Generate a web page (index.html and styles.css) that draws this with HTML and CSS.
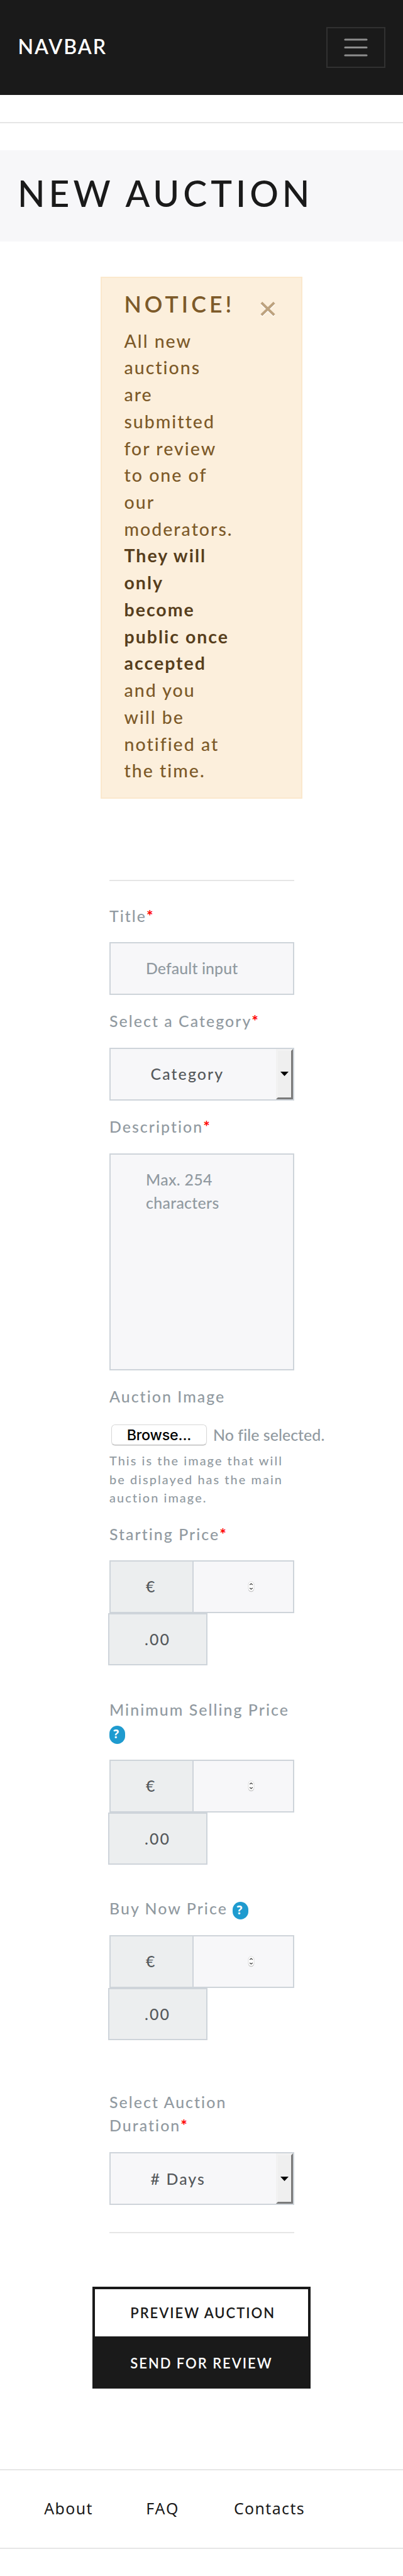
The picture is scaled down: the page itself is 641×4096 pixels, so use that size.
FILE: index.html
```html
<!DOCTYPE html>
<html lang="en">
<head>
<meta charset="utf-8">
<title>New Auction</title>
<link rel="stylesheet" href="styles.css">
</head>
<body>
<nav class="navbar">
  <a class="brand">NAVBAR</a>
  <button class="toggler" type="button" aria-label="Menu">
    <svg width="38" height="29" viewBox="0 0 38 29" fill="none" stroke="#8d8d8d" stroke-width="3.2" stroke-linecap="round"><path d="M2 2h34M2 14.5h34M2 27h34"/></svg>
  </button>
</nav>
<hr class="rule rule-top">
<header class="jumbotron"><h1>NEW AUCTION</h1></header>

<section class="alert">
  <div class="alert-head">
    <h4>NOTICE!</h4>
    <svg class="close" width="24" height="26" viewBox="0 0 24 26" fill="none" stroke-width="4"><path stroke="#fff" d="M1.8 4L22.2 23.5M22.2 4L1.8 23.5"/><path stroke="#bda27e" d="M1.8 2.3L22.2 22M22.2 2.3L1.8 22"/></svg>
  </div>
  <p>All new<br>auctions<br>are<br>submitted<br>for review<br>to one of<br>our<br>moderators.<br><strong>They will<br>only<br>become<br>public once<br>accepted</strong><br>and you<br>will be<br>notified at<br>the time.</p>
</section>

<form class="form">
  <hr class="rule">
  <label class="label label-first">Title<b>*</b></label>
  <div class="control"><span>Default input</span></div>

  <label class="label">Select a Category<b>*</b></label>
  <div class="control select"><span>Category</span><i class="arrow"><svg width="13" height="7" viewBox="0 0 13 7"><path d="M0 0h13L6.5 7z"/></svg></i></div>

  <label class="label">Description<b>*</b></label>
  <div class="control textarea"><span>Max. 254<br>characters</span></div>

  <label class="label label-image">Auction Image</label>
  <div class="file"><span class="browse">Browse...</span><span class="filename">No file selected.</span></div>
  <small class="help">This is the image that will<br>be displayed has the main<br>auction image.</small>

  <label class="label">Starting Price<b>*</b></label>
  <div class="group">
    <div class="group-row"><span class="addon euro">€</span><span class="amount"><svg width="11" height="18" viewBox="0 0 11 18" fill="none"><rect x="1" y="1.7" width="9" height="15.5" rx="4.5" fill="#bbb"/><rect x="1" y="0.8" width="9" height="15.4" rx="4.5" fill="#fff" stroke="#d0d0d0" stroke-width=".7"/><path d="M3.2 6l2.3-2 2.3 2M3.2 11l2.3 2 2.3-2" stroke="#444" stroke-width="1.3"/></svg></span></div>
    <span class="addon cents">.00</span>
  </div>

  <label class="label label-gap">Minimum Selling Price<br><span class="badge">?</span></label>
  <div class="group">
    <div class="group-row"><span class="addon euro">€</span><span class="amount"><svg width="11" height="18" viewBox="0 0 11 18" fill="none"><rect x="1" y="1.7" width="9" height="15.5" rx="4.5" fill="#bbb"/><rect x="1" y="0.8" width="9" height="15.4" rx="4.5" fill="#fff" stroke="#d0d0d0" stroke-width=".7"/><path d="M3.2 6l2.3-2 2.3 2M3.2 11l2.3 2 2.3-2" stroke="#444" stroke-width="1.3"/></svg></span></div>
    <span class="addon cents">.00</span>
  </div>

  <label class="label label-gap">Buy Now Price <span class="badge">?</span></label>
  <div class="group">
    <div class="group-row"><span class="addon euro">€</span><span class="amount"><svg width="11" height="18" viewBox="0 0 11 18" fill="none"><rect x="1" y="1.7" width="9" height="15.5" rx="4.5" fill="#bbb"/><rect x="1" y="0.8" width="9" height="15.4" rx="4.5" fill="#fff" stroke="#d0d0d0" stroke-width=".7"/><path d="M3.2 6l2.3-2 2.3 2M3.2 11l2.3 2 2.3-2" stroke="#444" stroke-width="1.3"/></svg></span></div>
    <span class="addon cents">.00</span>
  </div>

  <label class="label label-duration">Select Auction<br>Duration<b>*</b></label>
  <div class="control select"><span>#&nbsp;Days</span><i class="arrow"><svg width="13" height="7" viewBox="0 0 13 7"><path d="M0 0h13L6.5 7z"/></svg></i></div>
  <hr class="rule rule-end">
</form>

<div class="actions">
  <a class="btn btn-outline">PREVIEW AUCTION</a>
  <a class="btn btn-solid">SEND FOR REVIEW</a>
</div>

<hr class="rule">
<footer class="footer"><a class="about">About</a><a class="faq">FAQ</a><a>Contacts</a></footer>
<hr class="rule">
</body>
</html>
```
FILE: styles.css
```css
* { box-sizing: border-box; }
html { overflow: hidden; }
body {
  margin: 0;
  width: 641px;
  height: 4096px;
  background: #fff;
  color: #55595c;
  font-family: Lato, "Open Sans", sans-serif;
  font-size: 24.9px;
  font-weight: 500;
  line-height: 37.4px;
  letter-spacing: 2.04px;
}
h1, h4, p { margin: 0; }
.rule { margin: 0; border: 0; height: 2px; background: #e6e6e6; }
.rule-top { margin: 43px 0 42.5px; }

.navbar {
  height: 151px;
  padding: 0 28.4px;
  background: #1a1a1a;
  display: flex;
  align-items: center;
  justify-content: space-between;
}
.brand { color: #fff; font-size: 32px; font-weight: 600; padding-bottom: 4px; }
.toggler {
  width: 93.5px;
  height: 65px;
  padding: 0;
  border: 2px solid #313131;
  background: none;
  display: flex;
  align-items: center;
  justify-content: center;
}

.jumbotron { height: 145px; padding: 34.8px 28px 0; background: #f7f7f9; }
.jumbotron h1 {
  color: #1a1a1a;
  font-size: 57px;
  line-height: 68px;
  font-weight: 500;
  letter-spacing: 5.96px;
}

.alert {
  width: 320.7px;
  height: 830px;
  margin: 56.9px 0 128.2px 160.2px;
  padding: 21px 35.3px;
  border: 2px solid #fbe8cd;
  background: #fcefdc;
  color: #7d5a29;
}
.alert-head { display: flex; justify-content: space-between; height: 42px; }
.alert h4 { font-size: 35.6px; line-height: 42px; font-weight: 600; letter-spacing: 5.08px; }
.close { margin: 15.5px 5.5px 0 0; }
.alert p {
  margin-top: 15.2px;
  font-size: 28.5px;
  line-height: 42.73px;
  letter-spacing: 2px;
  white-space: nowrap;
}
.alert strong { color: #573e1c; font-weight: 700; }

.form { width: 293.7px; margin-left: 174px; }
.label { display: block; margin: 23.2px 0 23.4px; color: #919aa1; white-space: nowrap; }
.label b { color: #f00; }
.label-first { margin: 37.2px 0 23px; }
.label-image { margin: 22.9px 0 25.4px; }
.label-gap { margin: 51.2px 0 23.7px; }
.label-duration { margin: 79.2px 0 24.1px; }

.control {
  height: 83.7px;
  border: 2px solid #ced4da;
  background: #f7f7f9;
  padding-left: 56px;
  display: flex;
  align-items: center;
  color: #919aa1;
  letter-spacing: 0.1px;
}
.select {
  padding-left: 63.5px;
  justify-content: space-between;
  color: #55595c;
  letter-spacing: 2.1px;
}
.arrow {
  align-self: stretch;
  width: 26.5px;
  border: 3px solid;
  border-color: #f2f2f2 #7a7a7a #7a7a7a #f2f2f2;
  background: #efefef;
  display: flex;
  align-items: center;
  justify-content: center;
}
.textarea { height: 345.7px; align-items: flex-start; padding-top: 21.2px; letter-spacing: 0.3px; }

.file { display: flex; align-items: center; height: 34px; margin: 0 -60px 8.7px 3.2px; white-space: nowrap; }
.browse {
  width: 151.4px;
  height: 33px;
  border: 1px solid #d8d8d8;
  border-bottom-color: #bdbdbd;
  border-radius: 6px;
  box-shadow: 0 1px 1px #ddd;
  color: #000;
  font: 500 23.3px/31px Inter, sans-serif;
  letter-spacing: -0.2px;
  text-align: center;
}
.filename { margin-left: 10.5px; color: #919aa1; letter-spacing: 0.05px; }
.help {
  display: block;
  color: #919aa1;
  font-size: 19.9px;
  line-height: 29.95px;
  letter-spacing: 2.05px;
  white-space: nowrap;
}

.group { height: 167px; }
.group-row { display: flex; height: 83.4px; }
.addon {
  display: flex;
  align-items: center;
  height: 83.5px;
  border: 2px solid #ced4da;
  background: #eceeef;
}
.euro { width: 134px; padding-left: 56px; }
.cents { width: 158.4px; margin-left: -2px; padding-left: 56px; }
.amount {
  flex: 1;
  height: 83.5px;
  border: 2px solid #ced4da;
  border-left: 0;
  background: #f7f7f9;
  display: flex;
  align-items: center;
  padding-left: 86px;
}
.badge {
  display: inline-block;
  overflow: hidden;
  vertical-align: -7.9px;
  width: 25px;
  height: 28.6px;
  border-radius: 12.5px;
  padding-left: 6.3px;
  background: #1f9bcf;
  color: #fff;
  font: 700 18.7px/25.6px "Noto Sans", sans-serif;
  letter-spacing: 0;
}
.rule-end { margin-top: 42.5px; }

.actions { width: 347.2px; height: 161.5px; margin: 85.4px 0 128.1px 147.3px; }
.btn {
  display: flex;
  align-items: center;
  border: 4px solid #1a1a1a;
  padding-left: 56px;
  color: #1a1a1a;
  font-size: 22px;
  font-weight: 600;
  letter-spacing: 1.96px;
}
.btn-outline { height: 82.5px; }
.btn-solid { height: 79px; background: #1a1a1a; color: #fff; }

.footer {
  height: 123px;
  padding: 0 0 0 70.3px;
  display: flex;
  align-items: center;
  color: #1a1a1a;
  font-family: "Noto Sans", sans-serif;
  font-weight: 400;
  letter-spacing: 1.4px;
}
.about { width: 162px; }
.faq { width: 139.7px; font-kerning: none; }
```
